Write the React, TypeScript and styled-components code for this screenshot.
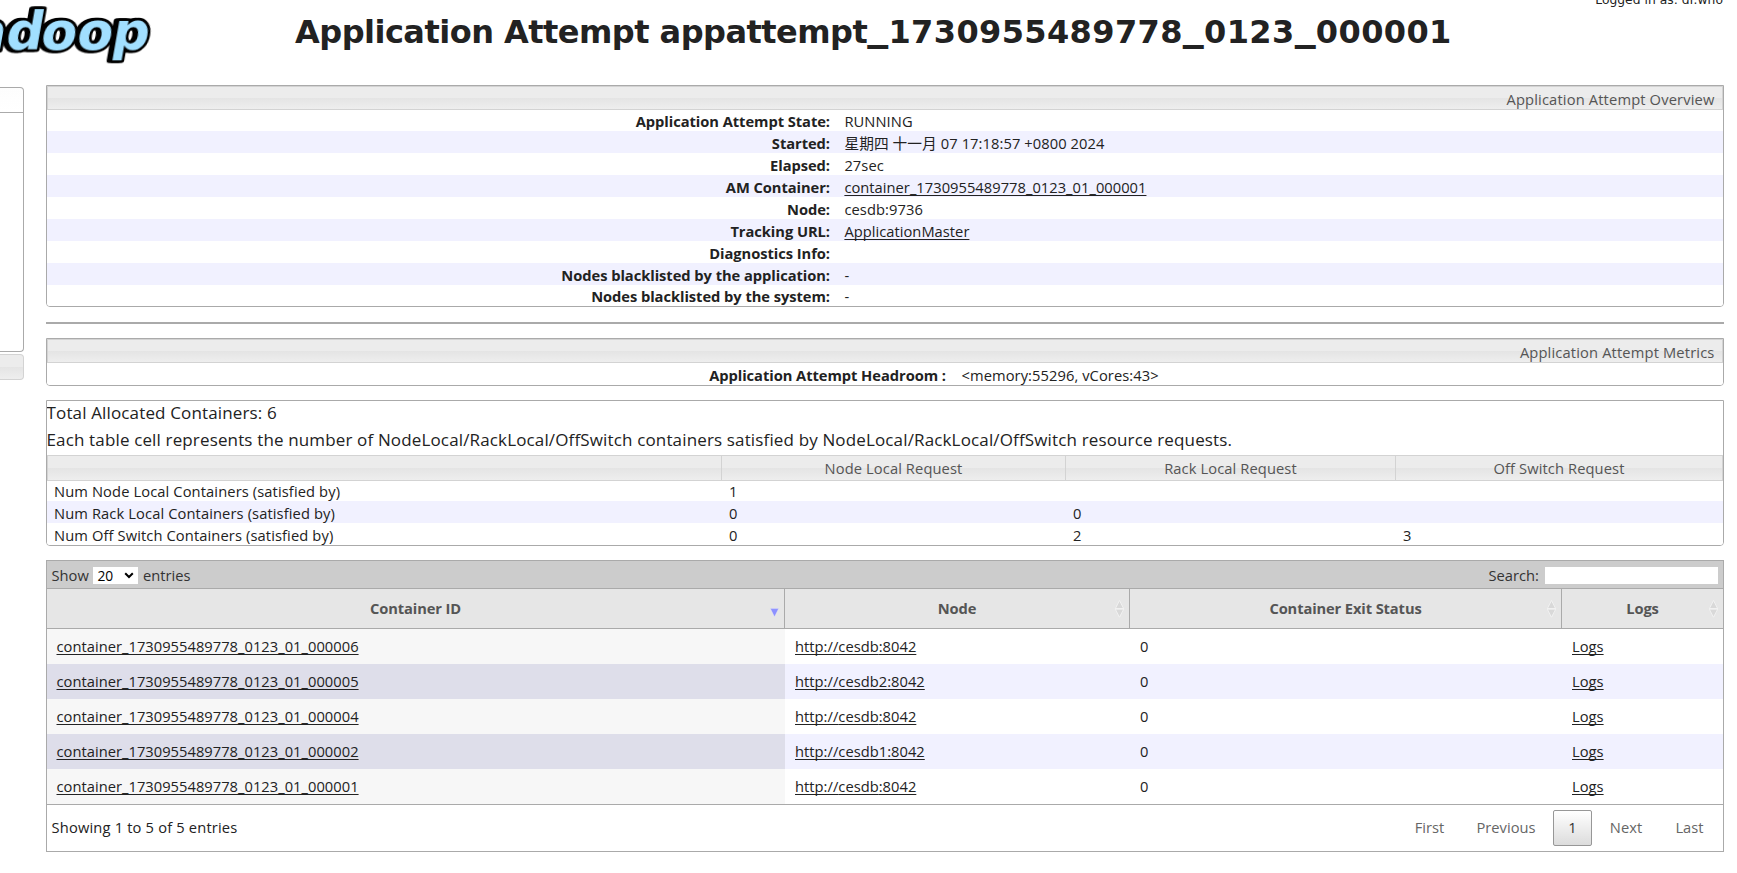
import React from 'react';
import styled, { createGlobalStyle, css } from 'styled-components';

const GlobalStyle = createGlobalStyle`
  *, *::before, *::after { box-sizing: border-box; }
  body {
    margin: 0;
    background: #fff;
    color: #222;
    overflow: hidden;
    font-family: 'Open Sans', 'Noto Sans CJK SC', sans-serif;
    font-size: 14.7px;
    letter-spacing: 0.03px;
  }
`;

const glass = css`
  border: 1px solid #d3d3d3;
  background: linear-gradient(to bottom, #ececec 0, #ececec 48%, #e4e4e4 50%, #eeeeee 100%);
  color: #555;
`;

const Page = styled.div`
  width: 1737px;
  height: 873px;
  overflow: hidden;
`;

const Header = styled.header`
  display: flex;
  align-items: flex-start;
  height: 85px;
`;

const Logo = styled.svg`
  flex: none;
  width: 160px;
  height: 70px;
  letter-spacing: 0;
`;

const LogoText = styled.text`
  fill: #a1dfff;
  stroke: #000;
  stroke-width: 5.5px;
  paint-order: stroke;
  filter: drop-shadow(-3px 0.5px 0 #000);
`;

const Title = styled.h1`
  margin: 12px 0 0 135px;
  flex: 1;
  font: bold 32px/40px 'DejaVu Sans', sans-serif;
  letter-spacing: -0.52px;
  white-space: nowrap;
`;

const TitleDigits = styled.span`
  letter-spacing: 0.38px;
`;

const WideUnderscore = styled.span`
  font-size: 42px;
  letter-spacing: 0.2px;
  line-height: 0;
  vertical-align: 4px;
`;

const Login = styled.div`
  flex: none;
  margin: -9px 14px 0 0;
  font: 12.3px/18px 'DejaVu Sans', sans-serif;
`;

const Body = styled.div`
  display: flex;
  gap: 22px;
`;

const Nav = styled.nav`
  flex: none;
  width: 24px;
  padding-top: 2px;
`;

const NavHead = styled.div`
  height: 26px;
  border: solid #aaa;
  border-width: 1px 1px 1px 0;
  border-radius: 0 4px 0 0;
  background: linear-gradient(#fdfdfd, #fff);
`;

const NavBody = styled.div`
  height: 239px;
  border: solid #aaa;
  border-width: 0 1px 1px 0;
  border-radius: 0 0 4px 0;
`;

const NavTools = styled.div`
  ${glass}
  height: 26px;
  margin-top: 2px;
  border-left: 0;
  border-radius: 0 4px 4px 0;
`;

const Main = styled.main`
  flex: none;
  width: 1678px;
`;

const Panel = styled.section`
  border: 1px solid #aaa;
  border-radius: 0 0 4px 4px;
  overflow: hidden;
`;

const PanelHead = styled.div`
  ${glass}
  height: 24px;
  padding-right: 7.5px;
  letter-spacing: 0.15px;
  line-height: 25px;
  text-align: right;
`;

const InfoRow = styled.div<{ $split: number; $gap?: number; $h?: number; $line?: number; $shade?: boolean }>`
  display: grid;
  grid-template-columns: ${p => p.$split}px 1fr;
  column-gap: ${p => p.$gap ?? 14.4}px;
  height: ${p => p.$h ?? 22}px;
  line-height: ${p => p.$line ?? 24}px;
  background: ${p => (p.$shade ? '#f1f1ff' : '#fff')};
`;

const InfoLabel = styled.div`
  height: 100%;
  font-weight: bold;
  letter-spacing: -0.05px;
  text-align: right;
  white-space: pre;
`;

const InfoValue = styled.div`
  letter-spacing: 0.08px;
  white-space: nowrap;
`;

const Link = styled.a`
  color: #222;
  letter-spacing: 0.03px;
  text-decoration: underline;
  text-decoration-thickness: 1px;
  text-underline-offset: 2px;
  text-decoration-skip-ink: none;
  cursor: pointer;
`;

const Rule = styled.hr`
  height: 2px;
  margin: 15px 0 14px;
  border: 0;
  background: #aaa;
`;

const Allocation = styled(Panel)`
  margin-top: 14px;
`;

const Sentence = styled.div`
  height: 27px;
  font-size: 17px;
  letter-spacing: 0.145px;
  line-height: 23px;
  text-indent: -0.5px;
  white-space: nowrap;
`;

const AllocRow = styled.div<{ $shade?: boolean }>`
  display: grid;
  grid-template-columns: 675px 344px 330px 327px;
  height: 22px;
  line-height: 24px;
  background: ${p => (p.$shade ? '#f1f1ff' : '#fff')};
`;

const AllocHead = styled(AllocRow)`
  height: 24px;
`;

const AllocHeadCell = styled.div`
  ${glass}
  letter-spacing: 0.1px;
  line-height: 24px;
  text-align: center;
  & + & { border-left: 0; }
`;

const AllocCell = styled.div`
  padding-left: 7px;
  letter-spacing: 0.11px;
`;

const DataTable = styled.section`
  margin-top: 14px;
  border: 1px solid #aaa;
`;

const Toolbar = styled.div`
  display: flex;
  align-items: center;
  height: 28px;
  padding: 2px 5px 0 4.5px;
  border-bottom: 1px solid #aaa;
  background: #ccc;
  color: #333;
`;

const ToolText = styled.span`
  margin-top: -2px;
`;

const PageSize = styled.div`
  display: flex;
  align-items: center;
  justify-content: space-between;
  width: 45px;
  height: 17px;
  margin: 0 4.5px 0 4.5px;
  padding: 0 4px;
  background: #fff;
  color: #000;
  font-size: 13.8px;
`;

const SearchLabel = styled.label`
  display: flex;
  align-items: center;
  gap: 6px;
  margin-left: auto;
`;

const SearchInput = styled.input`
  width: 173px;
  height: 17px;
  padding: 0;
  border: 0;
  background: #fff;
`;

const GridRow = styled.div<{ $shade?: boolean }>`
  display: grid;
  grid-template-columns: 738px 345px 432px 161px;
  height: 35px;
  line-height: 34px;
  background: ${p => (p.$shade ? '#f1f1ff' : '#fff')};
`;

const GridHead = styled(GridRow)`
  height: 40px;
  border-bottom: 1px solid #aaa;
  background: #e6e6e6;
`;

const GridHeadCell = styled.div`
  position: relative;
  border-right: 1px solid #aaa;
  color: #555;
  font-weight: bold;
  letter-spacing: -0.12px;
  line-height: 39px;
  text-align: center;
  &:last-child { border-right: 0; }
`;

const SortIcon = styled.svg`
  position: absolute;
  top: 11px;
  right: 5px;
  width: 9px;
  height: 18px;
`;

const GridCell = styled.div<{ $sorted?: 'odd' | 'even' }>`
  height: 35px;
  padding-left: ${p => (p.$sorted ? 9.5 : 10)}px;
  background: ${p => (p.$sorted === 'odd' ? '#f7f7f7' : p.$sorted === 'even' ? '#dedeea' : 'transparent')};
`;

const Footer = styled.div`
  display: flex;
  align-items: center;
  justify-content: space-between;
  height: 47px;
  padding: 0 4px 0 4.5px;
  border-top: 1px solid #aaa;
`;

const Status = styled.span`
  margin-top: -2px;
  letter-spacing: 0.17px;
`;

const Pager = styled.div`
  display: flex;
  gap: 2px;
`;

const PageButton = styled.span<{ $current?: boolean; $w: number }>`
  width: ${p => p.$w}px;
  height: 36px;
  border: 1px solid ${p => (p.$current ? '#979797' : 'transparent')};
  border-radius: 2px;
  background: ${p => (p.$current ? 'linear-gradient(#fff, #dcdcdc)' : 'none')};
  color: ${p => (p.$current ? '#333' : '#666')};
  line-height: 33px;
  text-align: center;
`;

const overview: { label: string; value: string; link?: boolean }[] = [
  { label: 'Application Attempt State:', value: 'RUNNING' },
  { label: 'Started:', value: '星期四 十一月 07 17:18:57 +0800 2024' },
  { label: 'Elapsed:', value: '27sec' },
  { label: 'AM Container:', value: 'container_1730955489778_0123_01_000001', link: true },
  { label: 'Node:', value: 'cesdb:9736' },
  { label: 'Tracking URL:', value: 'ApplicationMaster', link: true },
  { label: 'Diagnostics Info:', value: '' },
  { label: 'Nodes blacklisted by the application:', value: '-' },
  { label: 'Nodes blacklisted by the system:', value: '-' },
];

const allocation = [
  ['Num Node Local Containers (satisfied by)', '1', '', ''],
  ['Num Rack Local Containers (satisfied by)', '0', '0', ''],
  ['Num Off Switch Containers (satisfied by)', '0', '2', '3'],
];

const containers = [
  ['000006', 'cesdb'],
  ['000005', 'cesdb2'],
  ['000004', 'cesdb'],
  ['000002', 'cesdb1'],
  ['000001', 'cesdb'],
];

function HadoopLogo() {
  return (
    <Logo viewBox="0 0 160 70" fontFamily="DejaVu Sans" fontWeight="bold" fontSize="52" strokeLinejoin="round">
      <g transform="translate(0 49.5) skewX(-10)">
        <LogoText x="-31 4 39 75 110" y="0">adoop</LogoText>
      </g>
    </Logo>
  );
}

function SortMark({ active }: { active?: boolean }) {
  return (
    <SortIcon viewBox="0 0 9 18">
      {active ? (
        <path d="M0.4 8.6h8.2l-4.1 8.2z" fill="#8d91ff" stroke="#f4f4ff" strokeWidth="0.3" />
      ) : (
        <g fill="#d9d9d9" stroke="#f8f8f8" strokeWidth="0.7">
          <path d="M0.4 8.6L4.5 0.5l4.1 8.1z" />
          <path d="M0.4 9.2h8.2L4.5 17.3z" />
        </g>
      )}
    </SortIcon>
  );
}

export default function App() {
  return (
    <Page>
      <GlobalStyle />
      <Header>
        <HadoopLogo />
        <Title>
          Application Attempt appattempt
          <TitleDigits>
            {['1730955489778', '0123', '000001'].map(part => (
              <React.Fragment key={part}>
                <WideUnderscore>_</WideUnderscore>
                {part}
              </React.Fragment>
            ))}
          </TitleDigits>
        </Title>
        <Login>Logged in as: dr.who</Login>
      </Header>
      <Body>
        <Nav>
          <NavHead />
          <NavBody />
          <NavTools />
        </Nav>
        <Main>
          <Panel>
            <PanelHead>Application Attempt Overview</PanelHead>
            {overview.map((row, i) => (
              <InfoRow
                key={row.label}
                $split={783}
                $shade={i % 2 === 1}
                $h={i === 0 || i === 8 ? 21 : 22}
                $line={i === 0 || i === 8 ? 22 : 24}
              >
                <InfoLabel>{row.label}</InfoLabel>
                <InfoValue>{row.link ? <Link>{row.value}</Link> : row.value}</InfoValue>
              </InfoRow>
            ))}
          </Panel>
          <Rule />
          <Panel>
            <PanelHead>Application Attempt Metrics</PanelHead>
            <InfoRow $split={899} $gap={15.5}>
              <InfoLabel>Application Attempt Headroom :</InfoLabel>
              <InfoValue>&lt;memory:55296, vCores:43&gt;</InfoValue>
            </InfoRow>
          </Panel>
          <Allocation>
            <Sentence>Total Allocated Containers: 6</Sentence>
            <Sentence>
              Each table cell represents the number of NodeLocal/RackLocal/OffSwitch containers satisfied by
              NodeLocal/RackLocal/OffSwitch resource requests.
            </Sentence>
            <AllocHead>
              {['', 'Node Local Request', 'Rack Local Request', 'Off Switch Request'].map(h => (
                <AllocHeadCell key={h}>{h}</AllocHeadCell>
              ))}
            </AllocHead>
            {allocation.map((cells, i) => (
              <AllocRow key={cells[0]} $shade={i % 2 === 1}>
                {cells.map((c, j) => (
                  <AllocCell key={j}>{c}</AllocCell>
                ))}
              </AllocRow>
            ))}
          </Allocation>
          <DataTable>
            <Toolbar>
              <ToolText>Show</ToolText>
              <PageSize>
                20
                <svg width="10" height="7" viewBox="0 0 10 7">
                  <path d="M1.2 1.2L5 5l3.8-3.8" fill="none" stroke="#000" strokeWidth="2" />
                </svg>
              </PageSize>
              <ToolText>entries</ToolText>
              <SearchLabel>
                <ToolText>Search:</ToolText>
                <SearchInput />
              </SearchLabel>
            </Toolbar>
            <GridHead>
              {['Container ID', 'Node', 'Container Exit Status', 'Logs'].map((h, i) => (
                <GridHeadCell key={h}>
                  {h}
                  <SortMark active={i === 0} />
                </GridHeadCell>
              ))}
            </GridHead>
            {containers.map(([id, host], i) => (
              <GridRow key={id} $shade={i % 2 === 1}>
                <GridCell $sorted={i % 2 ? 'even' : 'odd'}>
                  <Link>container_1730955489778_0123_01_{id}</Link>
                </GridCell>
                <GridCell><Link>http://{host}:8042</Link></GridCell>
                <GridCell>0</GridCell>
                <GridCell><Link>Logs</Link></GridCell>
              </GridRow>
            ))}
            <Footer>
              <Status>Showing 1 to 5 of 5 entries</Status>
              <Pager>
                <PageButton $w={59}>First</PageButton>
                <PageButton $w={90}>Previous</PageButton>
                <PageButton $w={39} $current>1</PageButton>
                <PageButton $w={64}>Next</PageButton>
                <PageButton $w={59}>Last</PageButton>
              </Pager>
            </Footer>
          </DataTable>
        </Main>
      </Body>
    </Page>
  );
}
